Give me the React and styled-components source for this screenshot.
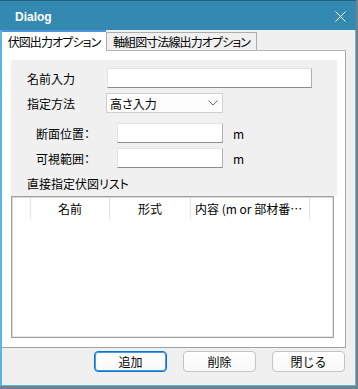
import React from "react";
import styled, { createGlobalStyle } from "styled-components";

const Global = createGlobalStyle`
  html, body { margin: 0; padding: 0; background: #6f828c; }
  body {
    font-family: "Noto Sans CJK JP", "Noto Sans", sans-serif;
    font-size: 12px;
    color: #000;
    font-feature-settings: "palt";
  }
  * { box-sizing: border-box; }
`;

const Window = styled.div`
  width: 356px;
  height: 386px;
  display: flex;
  flex-direction: column;
`;

const TitleBar = styled.div`
  height: 30px;
  flex: none;
  background: #3489b1;
  border-top: 1px solid #24607c;
  display: flex;
  align-items: center;
  justify-content: space-between;
  padding: 2px 10px 0 15px;
`;

const Title = styled.span`
  font-family: "Liberation Sans", Arial, sans-serif;
  font-weight: bold;
  font-size: 12px;
  color: #fff;
`;

const Frame = styled.div`
  flex: 1;
  display: flex;
  flex-direction: column;
  background: #f0f0f0;
  border-left: 2px solid #5ab4de;
  border-right: 1px solid #6cb6da;
  border-bottom: 1px solid #5ab4de;
`;

const TabRow = styled.div`
  height: 20px;
  display: flex;
  align-items: flex-end;
`;

const Tab = styled.div`
  display: flex;
  align-items: center;
  justify-content: center;
  white-space: nowrap;
  font-size: 12px;
  letter-spacing: -0.9px;
  ${(p) =>
    p.$active
      ? `
    width: 104px;
    height: 21px;
    margin-bottom: -1px;
    background: #fff;
    border-top: 2px solid #4a95dc;
    position: relative;
    z-index: 1;
  `
      : `
    width: 151px;
    height: 18px;
    background: #f0f0f0;
    border: 1px solid #adadad;
    border-bottom: none;
  `}
`;

const Panel = styled.div`
  width: 344px;
  height: 298px;
  background: #fff;
  border-top: 1px solid #b4b4b4;
  border-right: 1px solid #a8a8a8;
  border-bottom: 1px solid #a0a0a0;
  padding: 9px 0 0 9px;
  display: flex;
  flex-direction: column;
`;

const Group = styled.div`
  width: 326px;
  height: 136px;
  background: #f0f0f0;
  padding-top: 8px;
  display: flex;
  flex-direction: column;
`;

const Row = styled.div`
  display: flex;
  align-items: center;
  height: 20px;
  padding-left: ${(p) => p.$indent}px;
  margin-top: ${(p) => p.$gap || 0}px;
`;

const Label = styled.span`
  width: ${(p) => p.$w}px;
  flex: none;
  white-space: nowrap;
`;

const TextBox = styled.div`
  width: ${(p) => p.$w}px;
  height: 20px;
  background: #fff;
  border: 1px solid;
  border-color: #e3e3e3 #b0b0b0 #8c8c8c #e3e3e3;
`;

const Select = styled.div`
  width: 117px;
  height: 20px;
  background: #fdfdfd;
  border: 1px solid #d0d0d0;
  display: flex;
  align-items: center;
  justify-content: space-between;
  padding: 0 4px 0 3px;
`;

const Unit = styled.span`
  margin-left: 10px;
`;

const ListLabel = styled.div`
  height: 20px;
  line-height: 20px;
  margin-top: 6px;
  padding-left: 16px;
`;

const List = styled.div`
  width: 323px;
  height: 142px;
  background: #fff;
  border: 1px solid #a0a0a0;
  box-shadow: inset 1px 1px 0 #d8d8d8, inset -1px -1px 0 #e6e6e6;
  padding: 1px;
`;

const Header = styled.div`
  display: flex;
  height: 21px;
`;

const HeadCell = styled.div`
  width: ${(p) => p.$w}px;
  flex: ${(p) => (p.$grow ? 1 : "none")};
  border-right: ${(p) => (p.$last ? "none" : "1px solid #e3e3e3")};
  display: flex;
  align-items: center;
  justify-content: ${(p) => (p.$left ? "flex-start" : "center")};
  padding-left: ${(p) => (p.$left ? 4 : 0)}px;
  white-space: nowrap;
  overflow: hidden;
`;

const ButtonBar = styled.div`
  display: flex;
  justify-content: flex-end;
  gap: 16px;
  padding: 3px 10px 0 0;
`;

const Button = styled.button`
  width: 73px;
  height: 21px;
  font-family: inherit;
  font-size: 12px;
  color: #000;
  background: linear-gradient(#fefefe, #f9f9f9);
  border: 1px solid ${(p) => (p.$primary ? "#0078d7" : "#c4c4c4")};
  box-shadow: ${(p) => (p.$primary ? "inset 0 0 0 1px #4a98df" : "none")};
  border-radius: 4px;
  padding: 0;
  display: flex;
  align-items: center;
  justify-content: center;
`;

const CloseIcon = () => (
  <svg width="11" height="11" viewBox="0 0 11 11">
    <path d="M0.5 0.5 L10.5 10.5 M10.5 0.5 L0.5 10.5" stroke="#fff" strokeWidth="1" fill="none" />
  </svg>
);

const Chevron = () => (
  <svg width="10" height="6" viewBox="0 0 10 6">
    <polyline points="0.5,0.5 5,5 9.5,0.5" stroke="#666" strokeWidth="1" fill="none" />
  </svg>
);

export default function App() {
  return (
    <>
      <Global />
      <Window>
        <TitleBar>
          <Title>Dialog</Title>
          <CloseIcon />
        </TitleBar>
        <Frame>
          <TabRow>
            <Tab $active>伏図出力オプション</Tab>
            <Tab>軸組図寸法線出力オプション</Tab>
          </TabRow>
          <Panel>
            <Group>
              <Row $indent={16}>
                <Label $w={80}>名前入力</Label>
                <TextBox $w={205} />
              </Row>
              <Row $indent={16} $gap={5}>
                <Label $w={79}>指定方法</Label>
                <Select>
                  <span>高さ入力</span>
                  <Chevron />
                </Select>
              </Row>
              <Row $indent={25} $gap={10}>
                <Label $w={81}>断面位置：</Label>
                <TextBox $w={106} />
                <Unit>m</Unit>
              </Row>
              <Row $indent={25} $gap={5}>
                <Label $w={81}>可視範囲：</Label>
                <TextBox $w={106} />
                <Unit>m</Unit>
              </Row>
              <ListLabel>直接指定伏図リスト</ListLabel>
            </Group>
            <List>
              <Header>
                <HeadCell $w={18} />
                <HeadCell $w={79}>名前</HeadCell>
                <HeadCell $w={81}>形式</HeadCell>
                <HeadCell $w={119} $left>内容 (m or 部材番…</HeadCell>
                <HeadCell $grow $last />
              </Header>
            </List>
          </Panel>
          <ButtonBar>
            <Button $primary>追加</Button>
            <Button>削除</Button>
            <Button>閉じる</Button>
          </ButtonBar>
        </Frame>
      </Window>
    </>
  );
}
